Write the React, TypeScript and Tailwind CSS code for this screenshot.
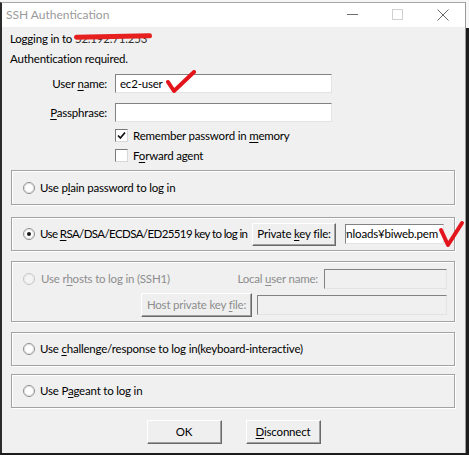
import React from 'react';

// access-key underline
const K = ({ children }: { children: React.ReactNode }) => (
    <span className="underline underline-offset-[2px] decoration-1">{children}</span>
);

const Radio = ({ checked = false, disabled = false }: { checked?: boolean; disabled?: boolean }) => (
    <svg width="12" height="12" viewBox="0 0 12 12" className="shrink-0">
        <circle cx="6" cy="6" r="5.5" fill={disabled ? '#f4f4f4' : '#fff'} stroke={disabled ? '#c4c4c4' : '#8d8d8d'} />
        <circle cx="6" cy="6" r="4.5" fill="none" stroke={disabled ? '#e8e8e8' : '#d9d9d9'} />
        {checked && <circle cx="6" cy="6" r="2" fill="#1a1a1a" />}
    </svg>
);

const Check = ({ checked = false }: { checked?: boolean }) => (
    <div className="w-[13px] h-[13px] bg-white border border-t-[#7a7a7a] border-l-[#7a7a7a] border-b-[#d8d8d8] border-r-[#d8d8d8] flex items-center justify-center shrink-0">
        {checked && (
            <svg width="9" height="9" viewBox="0 0 9 9">
                <path d="M1 4.5 L3.4 7 L8 1.5" fill="none" stroke="#111" strokeWidth="1.7" />
            </svg>
        )}
    </div>
);

const Btn = ({ children, className = '', disabled = false }: { children: React.ReactNode; className?: string; disabled?: boolean }) => (
    <div
        className={`flex items-center justify-center bg-[#efefef] border border-t-white border-l-white border-b-[#696969] border-r-[#696969] shadow-[inset_-1px_-1px_0_#a0a0a0] shrink-0 whitespace-nowrap ${disabled ? 'text-[#8d8d8d]' : 'text-black'} ${className}`}
    >
        <span>{children}</span>
    </div>
);

const Field = ({ children, className = '', disabled = false }: { children?: React.ReactNode; className?: string; disabled?: boolean }) => (
    <div
        className={`flex items-center overflow-hidden border border-t-[#828282] border-l-[#828282] border-b-[#e3e3e3] border-r-[#e3e3e3] shrink-0 ${disabled ? 'bg-[#f0f0f0]' : 'bg-white'} ${className}`}
    >
        {children}
    </div>
);

const Group = ({ children, className = '' }: { children: React.ReactNode; className?: string }) => (
    <div className={`ml-[1px] w-[444px] border border-[#a3a3a3] shadow-[inset_1px_1px_0_#fff,1px_1px_0_#fff] ${className}`}>{children}</div>
);

export default function App() {
    return (
        <div
            className="w-[469px] h-[455px] overflow-hidden bg-[linear-gradient(to_bottom,#f6f6f6_28px,#1c1c1c_28px)] pt-[2px] text-[11.5px] tracking-[-0.2px] text-black leading-none"
            style={{ fontFamily: 'Lato, "Noto Sans", sans-serif' }}
        >
            <div className="w-[466px] h-[451px] flex flex-col border-t border-t-[#a8a8a8] border-l-2 border-l-[#2b2b2b] border-r border-r-[#9a9a9a]">
                {/* title bar */}
                <div className="h-[24px] bg-white flex items-center relative shrink-0">
                    <span className="ml-[4px] text-[12px] tracking-normal text-[#9a9a9a]">SSH Authentication</span>
                    <div className="absolute left-[345px] top-[11px] w-[11px] h-px bg-[#6f6f6f]" />
                    <div className="absolute left-[390px] top-[6px] w-[11px] h-[11px] border border-[#d0d0d0]" />
                    <svg className="absolute left-[435px] top-[6px]" width="12" height="12" viewBox="0 0 12 12">
                        <path d="M0.5 0.5 L11.5 11.5 M11.5 0.5 L0.5 11.5" stroke="#6a6a6a" strokeWidth="1" />
                    </svg>
                </div>

                {/* body */}
                <div className="flex-1 bg-[#f0f0f0] pl-[8px] flex flex-col relative">
                    <div className="mt-[3px] h-[18px] flex items-center relative">
                        <span>Logging in to&nbsp;</span>
                        <span className="text-[#333]">52.192.71.253</span>
                        <div className="absolute left-[64px] top-[4px] w-[78px] h-[5px] rounded-full bg-[#e5201e] -rotate-[1deg]" />
                    </div>
                    <div className="mt-[2px] h-[18px] flex items-center">Authentication required.</div>

                    <div className="mt-[6px] h-[19px] flex items-center relative">
                        <div className="w-[97px] text-right">
                            User <K>n</K>ame:
                        </div>
                        <Field className="ml-[8px] w-[217px] h-[19px] pl-[4px]">ec2-user</Field>
                        <svg className="absolute left-[155px] top-[-4px]" width="32" height="24" viewBox="0 0 32 24">
                            <path d="M3 12 L9 21 L29 2" fill="none" stroke="#e3141b" strokeWidth="4" strokeLinecap="round" strokeLinejoin="round" />
                        </svg>
                    </div>
                    <div className="mt-[10px] h-[19px] flex items-center">
                        <div className="w-[97px] text-right">
                            <K>P</K>assphrase:
                        </div>
                        <Field className="ml-[8px] w-[217px] h-[19px]" />
                    </div>

                    <div className="mt-[7px] h-[13px] flex items-center pl-[105px] gap-[5px]">
                        <Check checked />
                        <span>
                            Remember password in <K>m</K>emory
                        </span>
                    </div>
                    <div className="mt-[7px] h-[13px] flex items-center pl-[105px] gap-[5px]">
                        <Check />
                        <span>
                            F<K>o</K>rward agent
                        </span>
                    </div>

                    <Group className="mt-[8px] h-[35px] flex items-center pl-[11px] gap-[5px]">
                        <Radio />
                        <span>
                            Use p<K>l</K>ain password to log in
                        </span>
                    </Group>

                    <Group className="mt-[12px] h-[34px] flex items-center pl-[11px] relative">
                        <Radio checked />
                        <span className="ml-[5px] w-[212px] whitespace-nowrap tracking-[-0.6px]">
                            Use <K>R</K>SA/DSA/ECDSA/ED25519 key to log in
                        </span>
                        <Btn className="w-[84px] h-[23px]">
                            Private <K>k</K>ey file:
                        </Btn>
                        <Field className="ml-[9px] w-[99px] h-[20px] justify-end pr-[5px] whitespace-nowrap">
                            <span>C:¥Users¥user¥Downloads¥biweb.pem</span>
                        </Field>
                        <svg className="absolute left-[425px] top-[2px]" width="28" height="28" viewBox="0 0 28 28">
                            <path d="M4 10 L11 25 L25 3" fill="none" stroke="#e3141b" strokeWidth="4" strokeLinecap="round" strokeLinejoin="round" />
                        </svg>
                    </Group>

                    <Group className="mt-[10px] h-[61px] flex flex-col pt-[7px] pr-[7px] text-[#8d8d8d]">
                        <div className="h-[20px] flex items-center">
                            <div className="flex-1 flex items-center pl-[11px] gap-[6px]">
                                <Radio disabled />
                                <span>
                                    Use r<K>h</K>osts to log in (SSH1)
                                </span>
                            </div>
                            <span>
                                Local <K>u</K>ser name:
                            </span>
                            <Field disabled className="ml-[6px] w-[123px] h-[20px]" />
                        </div>
                        <div className="mt-[4px] h-[24px] flex items-center justify-end">
                            <Btn disabled className="w-[111px] h-[24px]">
                                Host private key <K>f</K>ile:
                            </Btn>
                            <Field disabled className="ml-[5px] w-[190px] h-[20px]" />
                        </div>
                    </Group>

                    <Group className="mt-[10px] h-[34px] flex items-center pl-[11px] gap-[5px]">
                        <Radio />
                        <span>
                            Use <K>c</K>hallenge/response to log in(keyboard-interactive)
                        </span>
                    </Group>

                    <Group className="mt-[8px] h-[34px] flex items-center pl-[11px] gap-[5px]">
                        <Radio />
                        <span>
                            Use P<K>a</K>geant to log in
                        </span>
                    </Group>

                    <div className="mt-[12px] pr-[8px] flex justify-center gap-[24px]">
                        <Btn className="w-[75px] h-[24px]">OK</Btn>
                        <Btn className="w-[75px] h-[24px]">
                            <K>D</K>isconnect
                        </Btn>
                    </div>
                </div>
            </div>
        </div>
    );
}
